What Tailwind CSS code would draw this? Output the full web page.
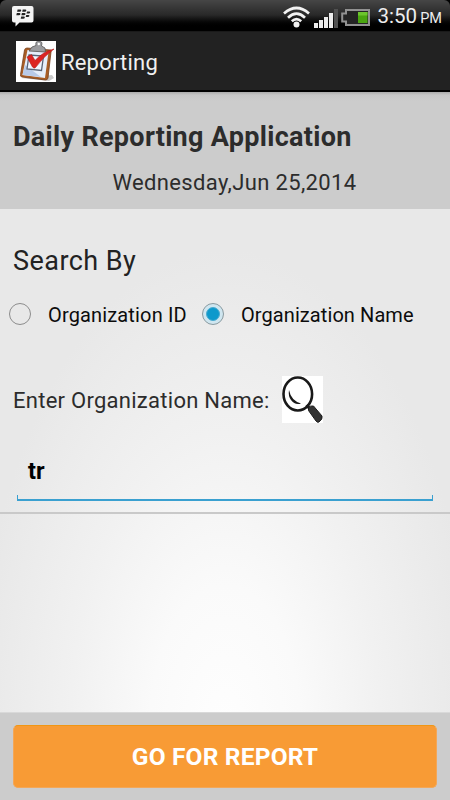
<!DOCTYPE html>
<html lang="en">
<head>
  <meta charset="UTF-8" />
  <meta name="viewport" content="width=device-width, initial-scale=1.0"/>
  <title>Reporting</title>
  <script src="https://cdn.jsdelivr.net/npm/@tailwindcss/browser@4"></script>
</head>
<body class="bg-black font-[Roboto,sans-serif]">
  <div class="flex flex-col w-[450px] h-[800px] overflow-hidden">

    <!-- Status bar -->
    <header class="flex items-center h-[31px] shrink-0 rounded-t-md bg-linear-to-b from-[#464646] from-0% via-[#292929] via-48% to-black to-90% pl-3 pr-2">
      <svg class="w-[22px] h-[22px] mt-0.5" viewBox="0 0 22 22">
        <path d="M2 0H19.500Q21.500 0 21.500 2V14.500Q21.500 16.500 19.500 16.500H7.500L3.500 20.500V16.500H2Q0 16.500 0 14.500V2Q0 0 2 0Z" fill="#f4f4f4"/>
        <g fill="#222">
          <path d="M5.600 3.500h2.600q1.200.1 1 1.200t-1.600 1.100h-2.500zM10.700 3.500h2.600q1.200.1 1 1.200t-1.600 1.100h-2.500z"/>
          <path d="M4.800 7h2.600q1.200.1 1 1.200t-1.600 1.100h-2.500zM9.900 7h2.600q1.200.1 1 1.200t-1.600 1.100h-2.500zM15 5.400h2.200q1.200.1 1 1.100t-1.500 1.100h-2.200z"/>
          <path d="M9.200 10.500h2.600q1.200.1 1 1.200t-1.600 1.100h-2.500zM14.200 8.900h2.200q1.200.1 1 1.100t-1.500 1.100h-2.200z"/>
        </g>
      </svg>
      <div class="flex items-center ml-auto">
        <svg class="w-[27px] h-[22px] mt-0.5" viewBox="0 0 27 22" fill="none" stroke="#f2f2f2" stroke-width="2.700">
          <path d="M1 7.500Q13.500 -3.500 26 7.500"/>
          <path d="M5 11.700Q13.500 3.700 22 11.700"/>
          <path d="M8.800 15.300Q13.500 11 18.200 15.300"/>
          <circle cx="13.500" cy="18.600" r="3" fill="#f2f2f2" stroke="none"/>
        </svg>
        <svg class="w-6 h-[19px] ml-1 mt-[5px]" viewBox="0 0 24 19" fill="#ececec">
          <path d="M0 14h4v5H0zM5 11h4v8H5zM10 8h4v11h-4zM15 4h4v15h-4z"/>
          <path d="M20 0h4v19h-4z" fill="#505050"/>
        </svg>
        <svg class="w-[29px] h-[17px] ml-[3px] mt-[3px]" viewBox="0 0 29 17">
          <path d="M5 1H28V16H5V12.500H1.200V4.500H5Z" fill="#242424" stroke="#929292" stroke-width="2"/>
          <path d="M17 3h9.500v11H17z" fill="#49a50f"/>
          <path d="M17 3h9.500v3.500H17z" fill="#6cc52d"/>
        </svg>
        <span class="ml-2 mt-[3px] text-[20.500px] leading-6 text-[#eee] whitespace-nowrap">3:50 <span class="text-[14.500px] -ml-0.5">PM</span></span>
      </div>
    </header>

    <!-- Action bar -->
    <div class="flex items-center h-[61px] shrink-0 bg-[#222] border-t border-[#1a1a1a] border-b-2 border-b-black pl-4">
      <svg class="w-10 h-[41px]" viewBox="0 0 40 41">
        <path d="M0 0h40v41H0z" fill="#fff"/>
        <path d="M5 37L33 40L38 37L36 34z" fill="#c9c9c9"/>
        <path d="M11 7L34.500 9Q35.500 9 35 11L32 37Q31.500 39 29.500 39L6 36Q4 35.500 4.500 33.500L8.500 9Q9 7 11 7Z" fill="#a85d25" stroke="#77401d" stroke-width=".8"/>
        <path d="M11.500 9L32.500 11L29 37L6.500 34Z" fill="#e6eefa"/>
        <path d="M9 24L25 36L6.500 34Z" fill="#b8cae8"/>
        <path d="M13 14L27.500 15L25.500 29.500L11 28Z" fill="#eff5ff" stroke="#5a6477" stroke-width="1.300"/>
        <path d="M13 10L16 6L20 4.500Q19 0 23 0Q27 0 25.500 5L29 7L29.500 11Z" fill="#9c9da0" stroke="#555" stroke-width=".8"/>
        <circle cx="22.800" cy="3" r="1.200" fill="#fff"/>
        <path d="M11 16L15.500 13.500L19 19.500Q27 10.500 38 8Q27.500 15.500 19.500 26.500Q18 28 16.500 26Z" fill="#dc2422" stroke="#b31716" stroke-width=".6"/>
      </svg>
      <h1 class="ml-[5px] mt-[3px] text-[22px] leading-7 tracking-[0.200px] text-[#f0f0f0]">Reporting</h1>
    </div>

    <main class="flex flex-col flex-1 bg-[radial-gradient(ellipse_250px_480px_at_50%_90%,#fefefe_0%,#fafafa_30%,#f1f1f1_62%,#e8e8e8_100%)]">
      <div class="h-[117px] shrink-0 bg-[#ccc] bg-[linear-gradient(#aaa_0px,#c6c6c6_3px,#ccc_9px)] text-[#2c2c2c] pt-[29px]">
        <h2 class="pl-[13px] text-[27px] leading-8 font-bold tracking-[0.300px] whitespace-nowrap">Daily Reporting Application</h2>
        <p class="mt-4 pl-[112.500px] text-[22px] leading-7 tracking-[0.350px] whitespace-nowrap">Wednesday,Jun 25,2014</p>
      </div>

      <section class="h-[305px] shrink-0 border-b-2 border-[#c9c9c9]">
        <h3 class="pt-9 pl-[13px] text-[27px] leading-8 tracking-[0.450px] text-[#222]">Search By</h3>

        <div class="flex items-center h-6 mt-[25px] pl-[9px] text-[20px] text-[#0c0c0c] whitespace-nowrap">
          <span class="size-[22px] rounded-full border border-[#8c8c8c] shrink-0"></span>
          <label class="w-[154px] ml-[17px] mt-px tracking-[0.150px] shrink-0">Organization ID</label>
          <span class="flex items-center justify-center size-[22px] rounded-full border border-[#8a9aa0] bg-[#cfe6f0] shrink-0">
            <span class="size-[14px] rounded-full border border-[#4babd0] bg-[#0d99cc]"></span>
          </span>
          <label class="ml-[17px] mt-px tracking-[0.080px]">Organization Name</label>
        </div>

        <div class="flex items-center h-[47px] mt-[50px] pl-[13px] text-[22px] text-[#2c2c2c] whitespace-nowrap">
          <span class="w-[269px] mt-0.5 tracking-[0.270px] shrink-0">Enter Organization Name:</span>
          <svg class="w-[41px] h-[47px]" viewBox="0 0 41 47">
            <path d="M0 0h41v47H0z" fill="#fff"/>
            <ellipse cx="15.800" cy="18" rx="14.300" ry="16.500" fill="none" stroke="#191919" stroke-width="2.600"/>
            <path d="M7 14Q9 24.500 19 27.500Q13 29.500 9 24Q6 20 7 14Z" fill="#191919"/>
            <path d="M24.500 29L28 33" stroke="#191919" stroke-width="3"/>
            <path d="M26.500 34.500V31.500Q28 29.500 31.500 30L40 40Q41 43 37 46Q35.500 47 34 45Z" fill="#333" stroke="#1c1c1c" stroke-width="1"/>
          </svg>
        </div>

        <div class="flex items-center h-[78px] mx-[17px] pl-[11px] pt-5">
          <span class="text-[23.500px] font-bold text-black">tr</span>
        </div>
        <div class="h-1.5 mx-[17px] -mt-1.5 border-x border-b-2 border-[#3aa0d0]"></div>
      </section>

      <footer class="h-[88px] mt-auto shrink-0 bg-[#ccc] border-t border-[#d9d9d9] pl-[13px] pt-3">
        <button class="flex items-center justify-center w-[424px] h-[63px] rounded-[5px] bg-[#f89b35] border border-[#f3a758] border-t-[#f19613] pt-0.5 text-white text-[24.500px] tracking-[0.180px] font-bold">GO FOR REPORT</button>
      </footer>
    </main>
  </div>
</body>
</html>
